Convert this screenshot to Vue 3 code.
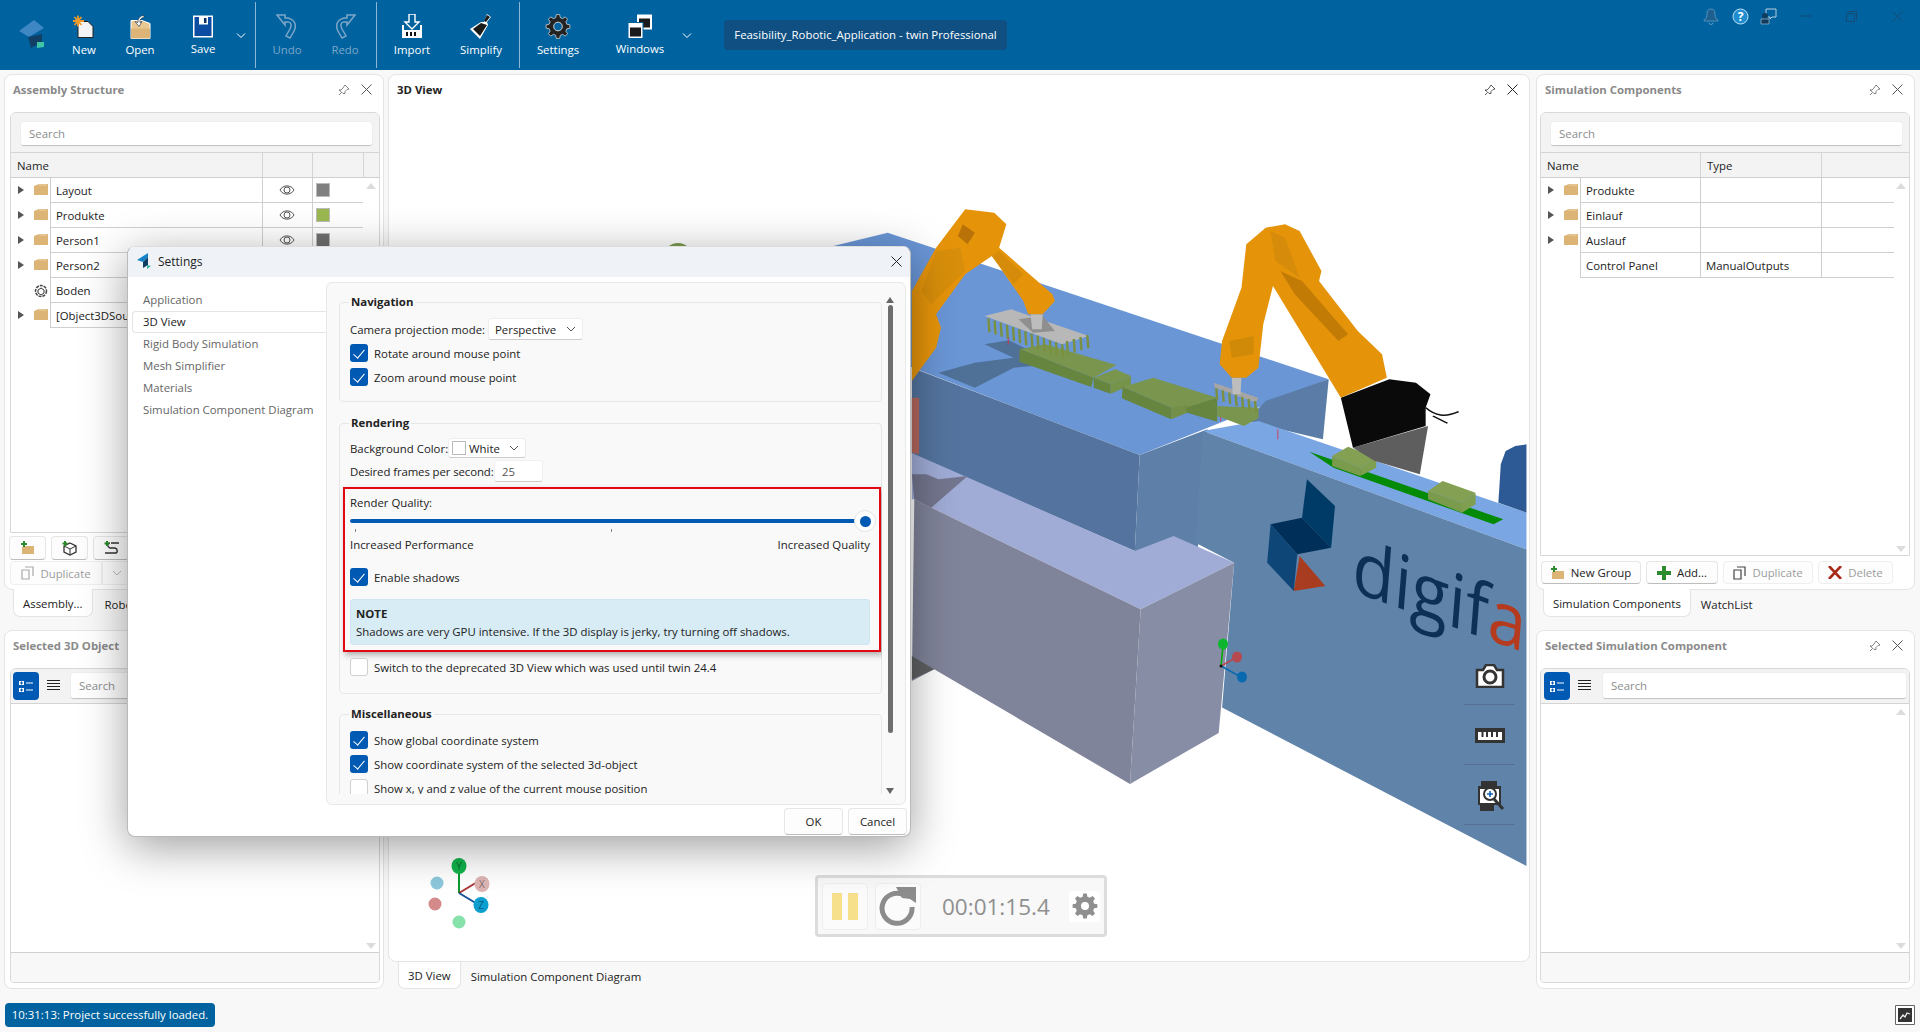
<template>
	<div class="app">
		<header class="topbar">
			<div class="logo-box">
				<svg width="28" height="30" viewBox="0 0 28 30">
					<polygon points="16,0 1,11 11,17 26,8" fill="#3f86c4" />
					<polygon points="10,17 24,14 24,22 13,28" fill="#123f66" />
					<polygon points="19,22 26,22 26,27 19,28" fill="#3fc4a4" />
				</svg>
			</div>
			<button class="tool w56">
				<svg class="tool-icon" width="24" height="24" viewBox="0 0 24 24">
					<path d="M6 7h10l5 5v11H6z" fill="#f4f4f4" stroke="#222" />
					<path d="M6 1v11M1 6.500h11M2.500 2.500l7 8M9.500 2.500l-7 8" stroke="#f09a2a" stroke-width="1.800" />
				</svg>
				<span>New</span>
			</button>
			<button class="tool w56">
				<svg class="tool-icon" width="26" height="24" viewBox="0 0 26 24">
					<path d="M4 6h11l8 3v15H4z" fill="#e9c792" stroke="#fff" />
					<path d="M4 14h19v10H4z" fill="#dcb478" />
					<path d="M17 1a6 6 0 0 0-6 7l-3-1 4 5 3-5-2 1a4 4 0 0 1 4-5z" fill="#fff" stroke="#123" stroke-width=".6" />
				</svg>
				<span>Open</span>
			</button>
			<button class="tool w70 raised">
				<svg class="tool-icon" width="22" height="22" viewBox="0 0 22 22">
					<path d="M1 0h20v22H1z" fill="#fff" />
					<path d="M2.500 1.500h17v19h-17z" fill="#0c4da2" />
					<path d="M7 1h9v8H7z" fill="#fff" />
					<path d="M12 2.500h2.500v5H12z" fill="#0c2f5c" />
				</svg>
				<span>Save</span>
			</button>
			<svg class="chev" width="12" height="8" viewBox="0 0 12 8"><path d="M2 1.500l4 4 4-4" fill="none" stroke="#fff" /></svg>
			<i class="sep"></i>
			<button class="tool w62 off">
				<svg class="tool-icon" width="22" height="25" viewBox="0 0 22 25">
					<path d="M1 1h8v3h3c7 2 9 7 6 13l-4 7-4-2 4-7c2-4 1-7-2-7H9v3z" fill="none" stroke="#7ba6c8" stroke-width="1.500" />
				</svg>
				<span>Undo</span>
			</button>
			<button class="tool w54 off">
				<svg class="tool-icon" width="22" height="25" viewBox="0 0 22 25">
					<path d="M21 1h-8v3h-3C3 6 1 11 4 17l4 7 4-2-4-7c-2-4-1-7 2-7h3v3z" fill="none" stroke="#7ba6c8" stroke-width="1.500" />
				</svg>
				<span>Redo</span>
			</button>
			<i class="sep"></i>
			<button class="tool w70">
				<svg class="tool-icon" width="24" height="25" viewBox="0 0 24 25">
					<path d="M9 0h6v8h4l-7 7-7-7h4z" fill="none" stroke="#fff" stroke-width="1.400" />
					<path d="M2 11v13h20V11h-2v5H4v-5z" fill="#fff" />
					<path d="M7 18v4M11 18v4M15 18v4" stroke="#111" stroke-width="2" />
				</svg>
				<span>Import</span>
			</button>
			<button class="tool w68">
				<svg class="tool-icon" width="26" height="25" viewBox="0 0 26 25">
					<path d="M19 0l4 3-4 5 1 3-8 14L2 15l11-7 3 0z" fill="#fff" />
					<path d="M13 9l6 2-7 11-7-7z" fill="#1a1a1a" />
					<path d="M19 1l3 2-4 5-2-1z" fill="#1a1a1a" />
				</svg>
				<span>Simplify</span>
			</button>
			<i class="sep"></i>
			<button class="tool w76">
				<svg class="tool-icon" width="26" height="25" viewBox="0 0 26 26">
					<path :d="gear(13, 13, 12.500, 9.500, 8)" fill="#222" stroke="#d8d8d8" stroke-width=".8" />
					<circle cx="13" cy="13" r="4.500" fill="#0063a0" stroke="#ddd" />
				</svg>
				<span>Settings</span>
			</button>
			<button class="tool w88 raised">
				<svg class="tool-icon" width="26" height="24" viewBox="0 0 26 24">
					<path d="M10 0h15v15H10z" fill="#fff" />
					<path d="M12 4h11v9H12z" fill="#1b1b1b" />
					<path d="M1 8h15v16H1z" fill="#fff" stroke="#0063a0" />
					<path d="M3 13h11v9H3z" fill="#1b1b1b" />
				</svg>
				<span>Windows</span>
			</button>
			<svg class="chev" width="12" height="8" viewBox="0 0 12 8"><path d="M2 1.500l4 4 4-4" fill="none" stroke="#fff" /></svg>
			<div class="title-badge">Feasibility_Robotic_Application - twin Professional</div>

			<div class="win-icons">
				<svg class="bell" width="16" height="17" viewBox="0 0 16 17"><path d="M8 1c3 0 4 2 4 5 0 3 1 5 3 6v1H1v-1c2-1 3-3 3-6 0-3 1-5 4-5z" fill="#1f5f90" stroke="#5f9cc4" stroke-width=".8" /><path d="M6 14.500a2 2 0 0 0 4 0" fill="none" stroke="#5f9cc4" /></svg>
				<svg width="17" height="17" viewBox="0 0 17 17"><circle cx="8.500" cy="8.500" r="7.500" fill="#1f8dd0" stroke="#bfe0f5" /><text x="8.500" y="12.500" text-anchor="middle" class="help">?</text></svg>
				<svg width="17" height="17" viewBox="0 0 17 17"><path d="M6 1h10v8h-4l-2 2V9H6z" fill="none" stroke="#bcd" /><circle cx="5" cy="8" r="3" fill="#123c5e" /><path d="M1 11h8v5H1z" fill="#123c5e" stroke="#bcd" stroke-width=".6" /></svg>
				<svg class="w-min" width="11" height="2" viewBox="0 0 11 2"><path d="M0 1h11" stroke="#174a72" /></svg>
				<svg class="w-max" width="11" height="11" viewBox="0 0 11 11"><path d="M.500 2.500h8v8h-8zM2.500.500h8v8" fill="none" stroke="#174a72" /></svg>
				<svg class="w-close" width="11" height="11" viewBox="0 0 11 11"><path d="M.500.500l10 10M10.500.500l-10 10" stroke="#174a72" /></svg>
			</div>
		</header>

		<main class="workspace">
			<section class="col left-col">
				<div class="panel tree-panel">
					<div class="panel-head">
						<span class="panel-title">Assembly Structure</span>
						<svg class="pin" width="12" height="12" viewBox="0 0 12 12"><path d="M7 1l4 4-2 .500-2 2 0 2L5 9.500 3 7.500l-2-1.500h2l2-2z M3.500 8.500L1 11" fill="none" stroke="#666" stroke-width=".8" /></svg>
						<svg class="x" width="11" height="11" viewBox="0 0 11 11"><path d="M.500.500l10 10M10.500.500l-10 10" stroke="#555" /></svg>
					</div>
					<div class="box assembly-box">
						<div class="search-row"><div class="search">Search</div></div>
						<div class="assembly-grid head-row">
							<span class="h-name">Name</span><span></span><span></span><span></span>
						</div>
						<div class="tree-body">
							<div class="assembly-grid row" v-for="r in assembly" :key="r.name">
								<span class="tw-cell">
									<i v-if="r.kids" class="twisty"></i>
									<svg v-if="r.kids" class="folder" width="14" height="11" viewBox="0 0 14 11"><path d="M0 2l5-2h9v11H0z" fill="#dcb476" /><path d="M5 1h8" stroke="#f0dcb8" stroke-width=".8" /></svg>
									<svg v-else class="folder" width="14" height="14" viewBox="0 0 14 14"><circle cx="7" cy="7" r="5.500" fill="none" stroke="#444" stroke-width="1.500" stroke-dasharray="3 1" /><path d="M7 4l3 2v3l-3 2-3-2V6z" fill="#fff" stroke="#333" /></svg>
								</span>
								<span class="cell">{{ r.name }}</span>
								<span class="cell center">
									<svg v-if="r.color" width="16" height="10" viewBox="0 0 16 10"><path d="M1 5c3-5.500 11-5.500 14 0-3 5.500-11 5.500-14 0z" fill="none" stroke="#555" /><circle cx="8" cy="5" r="3" fill="none" stroke="#555" /></svg>
								</span>
								<span class="cell">
									<i v-if="r.color" class="swatch" :style="{ background: r.color }"></i>
								</span>
							</div>
							<i class="scroll-up"></i>
						</div>
					</div>
					<div class="icon-btns">
						<button class="btn icon-btn"><svg width="14" height="14" viewBox="0 0 14 14"><path d="M1 6l4-1h8v8H1z" fill="#dcb476" /><path d="M3 0v6M0 3h6" stroke="#2d8a2d" stroke-width="2" /></svg></button>
						<button class="btn icon-btn"><svg width="16" height="15" viewBox="0 0 16 15"><path d="M8 2l6 3v6l-6 3-6-3V5z" fill="none" stroke="#333" stroke-width="1.300" /><path d="M2 5l6 3 6-3M8 8v6" fill="none" stroke="#333" /><path d="M3 0v5M.500 2.500h5" stroke="#2d8a2d" stroke-width="2" /></svg></button>
						<button class="btn icon-btn"><svg width="16" height="14" viewBox="0 0 16 14"><path d="M7 2h8M6 2c-3 0-3 4 0 5h5c3 1 3 5 0 5H1" fill="none" stroke="#333" stroke-width="1.400" /><path d="M3 0v5M.500 2.500h5" stroke="#2d8a2d" stroke-width="2" /></svg></button>
					</div>
					<div class="dup-row">
						<button class="btn dup off-text">
							<svg width="13" height="14" viewBox="0 0 13 14"><path d="M1 4h7v9H1zM4 1h8v9" fill="none" stroke="#aaa" stroke-width="1.200" /></svg>
							Duplicate
						</button>
						<button class="btn dup-more"><svg width="10" height="6" viewBox="0 0 10 6"><path d="M1 1l4 4 4-4" fill="none" stroke="#bbb" /></svg></button>
					</div>
				</div>
				<div class="tabs left-tabs">
					<span class="tab active">Assembly...</span>
					<span class="tab">Robot</span>
				</div>
				<div class="panel detail-panel">
					<div class="panel-head">
						<span class="panel-title">Selected 3D Object</span>
						<svg class="pin" width="12" height="12" viewBox="0 0 12 12"><path d="M7 1l4 4-2 .500-2 2 0 2L5 9.500 3 7.500l-2-1.500h2l2-2z M3.500 8.500L1 11" fill="none" stroke="#666" stroke-width=".8" /></svg>
						<svg class="x" width="11" height="11" viewBox="0 0 11 11"><path d="M.500.500l10 10M10.500.500l-10 10" stroke="#555" /></svg>
					</div>
					<div class="box detail-box">
						<div class="detail-tools">
							<button class="cat-btn"><svg width="14" height="13" viewBox="0 0 14 13"><path d="M0 1h5v4H0zM0 8h5v4H0z" fill="#fff" /><path d="M1 3h3M2.500 1.500v3M1 10h3M2.500 8.500v3" stroke="#0059b3" /><path d="M7 3h7M7 10h7" stroke="#fff" /></svg></button>
							<svg class="list-icon" width="13" height="12" viewBox="0 0 13 12"><path d="M0 .500h13M0 3.500h13M0 6.500h13M0 9.500h13" stroke="#222" /></svg>
							<div class="search">Search</div>
						</div>
						<div class="detail-body"><i class="scroll-up"></i><i class="scroll-down"></i></div>
						<div class="detail-foot"></div>
					</div>
				</div>
			</section>

			<section class="col center-col">
				<div class="panel view-panel">
					<svg class="scene" viewBox="388 74 1138 888">
						<ellipse cx="677" cy="256" rx="14" ry="14" fill="#7d9a4e" />
						<g transform="translate(780 180) scale(.4847 .3333)">
							<polygon v-for="(p, i) in scene" :key="i" :points="p.d" :fill="p.c" />
							<line v-for="(f, i) in fingers" :key="'f' + i" :x1="f.x" :y1="f.y" :x2="f.x + 2" :y2="f.y + f.h" stroke="#7a9040" stroke-width="5" />
							<path d="M1330 680c20 25 40 30 68 12M1345 705l30 22" fill="none" stroke="#111" stroke-width="4" />
							<path d="M469 470v20M1025 745v30M907 708v12" stroke="#e0304a" stroke-width="2" />
						</g>
						<text class="digifa" transform="translate(1350 590) rotate(19.500) skewX(15)">digif<tspan fill="#b53a1e">a</tspan></text>
						<!-- small axis on the selected object -->
						<path d="M1220 665l2-20" stroke="#0a0" stroke-width="1.500" />
						<path d="M1220 665l16-9" stroke="#b4494f" stroke-width="1.500" />
						<path d="M1220 665l20 11" stroke="#0a6ab0" stroke-width="1.500" />
						<ellipse cx="1222" cy="643" rx="5" ry="5.500" fill="#0bb52e" />
						<ellipse cx="1236" cy="656" rx="5" ry="5.500" fill="#b4494f" />
						<ellipse cx="1241" cy="676" rx="5" ry="5.500" fill="#0a6ab0" />
						<circle cx="1220" cy="665" r="1.500" fill="#111" />
						<!-- view gizmo -->
						<path d="M458 892v-24" stroke="#0a9a30" stroke-width="2" />
						<path d="M458 892l20-12" stroke="#a33" stroke-width="2" />
						<path d="M458 892l20 12" stroke="#14509a" stroke-width="2" />
						<circle cx="436" cy="882" r="6.500" fill="#8cc8dc" />
						<circle cx="434" cy="903" r="6.500" fill="#d48a8a" />
						<circle cx="458" cy="921" r="6.500" fill="#86e2aa" />
						<ellipse cx="481" cy="883" rx="7.500" ry="8" fill="#ddb5b5" />
						<ellipse cx="458" cy="865" rx="7.500" ry="8" fill="#11b34a" />
						<ellipse cx="480" cy="904" rx="7.500" ry="8" fill="#0d9fd0" />
						<text x="458" y="869" class="giz">Y</text>
						<text x="481" y="887" class="giz">X</text>
						<text x="480" y="908" class="giz">Z</text>
					</svg>
					<div class="panel-head over">
						<span class="panel-title dark">3D View</span>
						<svg class="pin" width="12" height="12" viewBox="0 0 12 12"><path d="M7 1l4 4-2 .500-2 2 0 2L5 9.500 3 7.500l-2-1.500h2l2-2z M3.500 8.500L1 11" fill="none" stroke="#333" stroke-width=".8" /></svg>
						<svg class="x" width="11" height="11" viewBox="0 0 11 11"><path d="M.500.500l10 10M10.500.500l-10 10" stroke="#222" /></svg>
					</div>
					<div class="view-tools">
						<span class="view-tool">
							<svg width="30" height="24" viewBox="0 0 30 24"><path d="M2 6h6l3-5h8l3 5h6v17H2z" fill="#fff" stroke="#333" stroke-width="2.500" /><circle cx="15" cy="13" r="6" fill="none" stroke="#333" stroke-width="3" /></svg>
						</span>
						<span class="view-tool">
							<svg width="30" height="15" viewBox="0 0 30 15"><path d="M0 0h30v15H0z" fill="#333" /><path d="M3 4h24v8H3z" fill="#fff" /><path d="M7.500 4v5M12 4v5M17 4v5M22 4v5" stroke="#333" stroke-width="2" /></svg>
						</span>
						<span class="view-tool">
							<svg width="30" height="30" viewBox="0 0 30 30"><path d="M6 0h16v5H6zM3 5h23v19H3z" fill="#333" /><path d="M5 8h19v14H5z" fill="#fff" /><circle cx="15" cy="13" r="6" fill="#fff" stroke="#333" stroke-width="2" /><path d="M12 13h6M15 10v6" stroke="#1060b0" stroke-width="1.600" /><path d="M19 18l9 10" stroke="#333" stroke-width="3" /><path d="M5 24h14v6H5z" fill="#333" /></svg>
						</span>
					</div>
					<div class="player">
						<span class="p-btn pause"><i></i><i></i></span>
						<span class="p-btn reload">
							<svg width="40" height="42" viewBox="0 0 40 42"><path d="M26 10A15 15 0 1 0 34 22" fill="none" stroke="#8c8c8c" stroke-width="5" /><path d="M18 2h20v16l-6-4-8-1z" fill="#8c8c8c" /></svg>
						</span>
						<span class="time">00:01:15.4</span>
						<span class="p-gear">
							<svg width="26" height="26" viewBox="0 0 26 26"><path :d="gear(13, 13, 12.500, 9.500, 8)" fill="#8f8f8f" /><circle cx="13" cy="13" r="4" fill="#fff" /></svg>
						</span>
					</div>
				</div>
				<div class="tabs center-tabs">
					<span class="tab active">3D View</span>
					<span class="tab">Simulation Component Diagram</span>
				</div>
			</section>

			<section class="col right-col">
				<div class="panel tree-panel">
					<div class="panel-head">
						<span class="panel-title">Simulation Components</span>
						<svg class="pin" width="12" height="12" viewBox="0 0 12 12"><path d="M7 1l4 4-2 .500-2 2 0 2L5 9.500 3 7.500l-2-1.500h2l2-2z M3.500 8.500L1 11" fill="none" stroke="#666" stroke-width=".8" /></svg>
						<svg class="x" width="11" height="11" viewBox="0 0 11 11"><path d="M.500.500l10 10M10.500.500l-10 10" stroke="#555" /></svg>
					</div>
					<div class="box comp-box">
						<div class="search-row"><div class="search">Search</div></div>
						<div class="comp-grid head-row">
							<span class="h-name">Name</span><span class="h-cell">Type</span><span></span>
						</div>
						<div class="tree-body">
							<div class="comp-grid row" v-for="r in components" :key="r.name">
								<span class="tw-cell">
									<i v-if="r.kids" class="twisty"></i>
									<svg v-if="r.kids" class="folder" width="14" height="11" viewBox="0 0 14 11"><path d="M0 2l5-2h9v11H0z" fill="#dcb476" /><path d="M5 1h8" stroke="#f0dcb8" stroke-width=".8" /></svg>
								</span>
								<span class="cell">{{ r.name }}</span>
								<span class="cell">{{ r.type }}</span>
								<span class="cell"></span>
							</div>
							<i class="scroll-up"></i><i class="scroll-down"></i>
						</div>
					</div>
					<div class="comp-btns">
						<button class="btn b-group"><svg width="14" height="14" viewBox="0 0 14 14"><path d="M1 6l4-1h8v8H1z" fill="#dcb476" /><path d="M3 0v6M0 3h6" stroke="#2d8a2d" stroke-width="2" /></svg>New Group</button>
						<button class="btn b-add"><svg width="14" height="14" viewBox="0 0 14 14"><path d="M7 0v14M0 7h14" stroke="#2d8a2d" stroke-width="4" /></svg>Add...</button>
						<button class="btn b-dup off-text"><svg width="13" height="14" viewBox="0 0 13 14"><path d="M1 4h7v9H1z" fill="none" stroke="#444" stroke-width="1.200" /><path d="M4 1h8v9" fill="none" stroke="#444" stroke-width="1.200" /></svg>Duplicate</button>
						<button class="btn b-del off-text"><svg width="14" height="13" viewBox="0 0 14 13"><path d="M1 0l12 13M13 0L1 13" stroke="#a82b17" stroke-width="2.600" /></svg>Delete</button>
					</div>
				</div>
				<div class="tabs right-tabs">
					<span class="tab active">Simulation Components</span>
					<span class="tab">WatchList</span>
				</div>
				<div class="panel detail-panel">
					<div class="panel-head">
						<span class="panel-title">Selected Simulation Component</span>
						<svg class="pin" width="12" height="12" viewBox="0 0 12 12"><path d="M7 1l4 4-2 .500-2 2 0 2L5 9.500 3 7.500l-2-1.500h2l2-2z M3.500 8.500L1 11" fill="none" stroke="#666" stroke-width=".8" /></svg>
						<svg class="x" width="11" height="11" viewBox="0 0 11 11"><path d="M.500.500l10 10M10.500.500l-10 10" stroke="#555" /></svg>
					</div>
					<div class="box detail-box">
						<div class="detail-tools">
							<button class="cat-btn"><svg width="14" height="13" viewBox="0 0 14 13"><path d="M0 1h5v4H0zM0 8h5v4H0z" fill="#fff" /><path d="M1 3h3M2.500 1.500v3M1 10h3M2.500 8.500v3" stroke="#0059b3" /><path d="M7 3h7M7 10h7" stroke="#fff" /></svg></button>
							<svg class="list-icon" width="13" height="12" viewBox="0 0 13 12"><path d="M0 .500h13M0 3.500h13M0 6.500h13M0 9.500h13" stroke="#222" /></svg>
							<div class="search">Search</div>
						</div>
						<div class="detail-body"><i class="scroll-up"></i><i class="scroll-down"></i></div>
						<div class="detail-foot"></div>
					</div>
				</div>
			</section>
		</main>

		<footer class="statusbar">
			<span class="status-msg">10:31:13: Project successfully loaded.</span>
			<span class="status-icon">
				<svg width="20" height="20" viewBox="0 0 20 20"><path d="M.500.500h19v19H.500z" fill="#fff" stroke="#666" /><path d="M3 3h14v14H3z" fill="#333" /><path d="M5 14l3-4 2 2 2-4 3 1" fill="none" stroke="#eee" stroke-width="1.300" /></svg>
			</span>
		</footer>

		<div class="dialog">
			<div class="dlg-title">
				<svg width="14" height="16" viewBox="0 0 14 16">
					<polygon points="11,0 0,7 6,9 11,4" fill="#1583c8" />
					<polygon points="6,9 11,4 11,12 6,15" fill="#0d3f66" />
					<polygon points="10,12 14,13 10,16" fill="#34b7a0" />
				</svg>
				<span>Settings</span>
				<svg class="dlg-x" width="11" height="11" viewBox="0 0 11 11"><path d="M.500.500l10 10M10.500.500l-10 10" stroke="#222" /></svg>
			</div>
			<div class="dlg-body">
				<nav class="dlg-nav">
					<a v-for="n in navItems" :key="n" class="nav-item" :class="{ active: n === '3D View' }">{{ n }}</a>
				</nav>
				<div class="dlg-content">
					<div class="scroller">
						<fieldset class="group nav-group">
							<legend>Navigation</legend>
							<div class="field">
								<label class="cam-label">Camera projection mode:</label>
								<span class="combo persp">Perspective<svg width="10" height="6" viewBox="0 0 10 6"><path d="M1 1l4 4 4-4" fill="none" stroke="#555" /></svg></span>
							</div>
							<div class="check first"><i class="box-on"></i>Rotate around mouse point</div>
							<div class="check"><i class="box-on"></i>Zoom around mouse point</div>
						</fieldset>
						<fieldset class="group render-group">
							<legend>Rendering</legend>
							<div class="field bg-row">
								<label class="bg-label">Background Color:</label>
								<span class="combo white"><i class="color-chip"></i>White<svg width="10" height="6" viewBox="0 0 10 6"><path d="M1 1l4 4 4-4" fill="none" stroke="#555" /></svg></span>
							</div>
							<div class="field fps-row">
								<label class="fps-label">Desired frames per second:</label>
								<span class="num">25</span>
							</div>
							<div class="callout">
								<div class="rq-label">Render Quality:</div>
								<div class="slider">
									<div class="track"></div>
									<div class="thumb"><i></i></div>
								</div>
								<div class="ticks"><i></i><i></i></div>
								<div class="rq-ends"><span>Increased Performance</span><span>Increased Quality</span></div>
								<div class="check shadow-check"><i class="box-on"></i>Enable shadows</div>
								<div class="note">
									<b>NOTE</b>
									<p>Shadows are very GPU intensive. If the 3D display is jerky, try turning off shadows.</p>
								</div>
							</div>
							<div class="check depr"><i class="box-off"></i>Switch to the deprecated 3D View which was used until twin 24.4</div>
						</fieldset>
						<fieldset class="group misc-group">
							<legend>Miscellaneous</legend>
							<div class="check"><i class="box-on"></i>Show global coordinate system</div>
							<div class="check"><i class="box-on"></i>Show coordinate system of the selected 3d-object</div>
							<div class="check"><i class="box-off"></i>Show x, y and z value of the current mouse position</div>
						</fieldset>
					</div>
					<div class="vbar">
						<i class="arr-up"></i>
						<i class="thumb-v"></i>
						<i class="arr-down"></i>
					</div>
				</div>
			</div>
			<div class="dlg-foot">
				<button class="btn dlg-btn">OK</button>
				<button class="btn dlg-btn">Cancel</button>
			</div>
		</div>
	</div>
</template>

<script setup>
const assembly = [
	{ name: "Layout", kids: true, color: "#808080" },
	{ name: "Produkte", kids: true, color: "#9bb850" },
	{ name: "Person1", kids: true, color: "#707070" },
	{ name: "Person2", kids: true, color: "#707070" },
	{ name: "Boden", kids: false, color: "" },
	{ name: "[Object3DSource]", kids: true, color: "" },
];

const components = [
	{ name: "Produkte", kids: true, type: "" },
	{ name: "Einlauf", kids: true, type: "" },
	{ name: "Auslauf", kids: true, type: "" },
	{ name: "Control Panel", kids: false, type: "ManualOutputs" },
];

const navItems = [
	"Application",
	"3D View",
	"Rigid Body Simulation",
	"Mesh Simplifier",
	"Materials",
	"Simulation Component Diagram",
];

// cog outline, used by the toolbar and the player
const gear = (cx, cy, outer, inner, teeth) => {
	let d = "";
	const step = (Math.PI * 2) / teeth;
	for (let i = 0; i < teeth; i++) {
		const a = i * step;
		const pts = [
			[inner, a - step * 0.32],
			[outer, a - step * 0.18],
			[outer, a + step * 0.18],
			[inner, a + step * 0.32],
		];
		pts.forEach(([r, t], j) => {
			const x = (cx + r * Math.cos(t)).toFixed(2);
			const y = (cy + r * Math.sin(t)).toFixed(2);
			d += `${i === 0 && j === 0 ? "M" : "L"}${x} ${y}`;
		});
	}
	return d + "Z";
};

const fingerRow = (x0, y0, x1, y1, n, h) =>
	Array.from({ length: n }, (_, i) => ({
		x: x0 + ((x1 - x0) * i) / (n - 1),
		y: y0 + ((y1 - y0) * i) / (n - 1),
		h,
	}));

const fingers = [
	...fingerRow(428, 412, 580, 490, 13, 42),
	...fingerRow(590, 480, 632, 462, 4, 40),
	...fingerRow(898, 622, 978, 660, 7, 34),
];

// polygons of the 3D scene, drawn back to front
const scene = [
	{ c: "#6a96d6", d: "108,195 220,155 1130,595 740,822 200,520 100,500" },
	{ c: "#4f7097", d: "325,575 400,545 480,530 420,490 470,478 640,600 560,550 480,560 400,620" },
	{ c: "#54749f", d: "270,560 740,822 730,1110 270,820" },
	{ c: "#5d7fa8", d: "740,822 880,745 860,1100 730,1110" },
	{ c: "#5a7ca6", d: "1000,660 1130,595 1118,775 960,720" },
	{ c: "#b5685e", d: "270,650 285,650 285,820 270,815" },
	{ c: "#a0acd6", d: "270,816 730,1110 810,1065 935,1145 742,1285 275,955 270,955" },
	{ c: "#74768f", d: "270,880 300,880 325,895 385,885 310,980 275,955" },
	{ c: "#80849a", d: "275,955 742,1285 720,1809 316,1465 270,1500" },
	{ c: "#878da5", d: "742,1285 935,1145 903,1656 720,1809" },
	{ c: "#5f6062", d: "270,1425 316,1465 270,1495" },
	{ c: "#7aa6e4", d: "870,750 985,720 1538,995 1538,1105" },
	{ c: "#6083aa", d: "870,750 1538,1105 1538,2055 910,1580 935,1145 855,1085" },
	{ c: "#003a66", d: "1085,895 1143,975 1135,1100 1075,1010" },
	{ c: "#00305a", d: "1010,1030 1075,1010 1135,1100 1065,1120" },
	{ c: "#0f4678", d: "1010,1030 1065,1120 1058,1230 1003,1145" },
	{ c: "#a83c20", d: "1070,1125 1123,1215 1058,1230" },

	// conveyor and boxes
	{ c: "#058a05", d: "1090,812 1490,1015 1470,1030 1140,860" },
	{ c: "#84a052", d: "1137,825 1170,797 1228,830 1195,860" },
	{ c: "#7a9a4c", d: "1137,825 1195,860 1195,885 1137,855" },
	{ c: "#7f9e50", d: "1195,860 1228,830 1228,860 1195,885" },
	{ c: "#84a052", d: "1335,930 1365,900 1433,935 1405,965" },
	{ c: "#7a9a4c", d: "1335,930 1405,965 1405,995 1335,955" },
	{ c: "#7f9e50", d: "1405,965 1433,935 1433,970 1405,995" },
	{ c: "#7a964e", d: "492,505 545,490 692,552 645,590" },
	{ c: "#66853e", d: "492,505 645,590 640,618 492,542" },
	{ c: "#7a964e", d: "645,590 690,565 722,585 680,610" },
	{ c: "#66853e", d: "645,590 680,610 680,638 645,620" },
	{ c: "#76934a", d: "680,610 722,585 722,612 680,638" },
	{ c: "#7a964e", d: "705,618 768,590 900,650 835,682 805,680" },
	{ c: "#66853e", d: "705,618 805,680 805,715 703,652" },
	{ c: "#738f48", d: "805,680 838,672 838,695 805,715" },
	{ c: "#66853e", d: "835,680 900,650 900,722 838,695" },
	{ c: "#7a964e", d: "900,675 985,680 985,712 955,735 900,705" },

	// stand, base and robots
	{ c: "#5e5e5e", d: "1180,800 1335,735 1318,880 1225,840" },
	{ c: "#0a0a0a", d: "1155,650 1255,595 1310,605 1340,640 1330,680 1330,735 1180,800" },
	{ c: "#2d5a94", d: "1485,850 1495,810 1515,795 1538,790 1538,995 1480,965" },
	{ c: "#b8b8b8", d: "420,405 475,385 635,465 580,490" },
	{ c: "#8f8f8f", d: "490,415 540,405 565,450 520,455" },
	{ c: "#bdbdbd", d: "515,400 540,400 538,445 518,445" },
	{ c: "#a5a5a5", d: "893,605 985,650 980,665 895,620" },
	{ c: "#bdbdbd", d: "930,590 950,590 948,640 932,640" },
	{ c: "#e5940a", d: "270,330 320,200 380,85 440,95 465,130 450,200 560,340 565,360 540,400 510,400 500,360 435,225 380,280 320,400 330,440 320,500 285,570 270,600" },
	{ c: "#b87208", d: "375,130 400,155 385,190 365,165" },
	{ c: "#d68c0a", d: "450,210 500,280 480,310 435,225" },
	{ c: "#d88e0a", d: "320,210 370,200 380,270 310,370 290,330" },
	{ c: "#e5940a", d: "960,190 1000,140 1040,130 1070,150 1115,270 1110,300 1190,450 1240,520 1250,590 1155,650 1105,530 1015,315 995,430 985,560 960,590 930,590 905,550 910,480 950,320" },
	{ c: "#c27c06", d: "1030,270 1075,300 1170,460 1150,480 1060,340" },
	{ c: "#d68c0a", d: "1010,150 1040,170 1070,290 1020,240" },
	{ c: "#d08a08", d: "925,480 975,465 975,520 930,530" },
];
</script>

<style>
body {
	margin: 0;
	background: #f8f8f8;
	overflow: hidden;
}
</style>

<style scoped>
* {
	box-sizing: border-box;
}
.app {
	position: relative;
	width: 1920px;
	height: 1032px;
	overflow: hidden;
	background: #f8f8f8;
	font: 11.4px "Open Sans", "Noto Sans", sans-serif;
	color: #222;
	display: flex;
	flex-direction: column;
}
button {
	font: inherit;
	color: inherit;
	padding: 0;
	border: 0;
	background: none;
}

/* top bar */
.topbar {
	height: 70px;
	background: #0063a0;
	display: flex;
	align-items: flex-start;
	flex: none;
}
.logo-box {
	width: 56px;
	padding: 20px 0 0 18px;
}
.tool {
	height: 70px;
	display: flex;
	flex-direction: column;
	align-items: center;
	color: #fff;
	padding-top: 14px;
}
.tool-icon {
	height: 25px;
	flex: none;
}
.tool span {
	margin-top: 3px;
	line-height: 16px;
}
.tool.raised span {
	margin-top: 2px;
}
.w54 { width: 54px; }
.w56 { width: 56px; }
.w62 { width: 62px; }
.w68 { width: 68px; }
.w70 { width: 70px; }
.w76 { width: 76px; }
.w88 { width: 88px; }
.tool.off {
	color: #7ba6c8;
}
.chev {
	margin: 32px 4px 0 -3px;
	flex: none;
}
.sep {
	width: 1px;
	height: 66px;
	margin: 2px 0 0 4px;
	background: #8bb8d6;
}
.title-badge {
	margin: 20px 0 0 27px;
	width: 283px;
	height: 30px;
	line-height: 30px;
	text-align: center;
	background: #0f4f82;
	color: #fff;
	border-radius: 4px;
}
.win-icons {
	margin-left: auto;
	height: 32px;
	display: flex;
	align-items: center;
	gap: 11px;
	padding-right: 17px;
}
.bell { margin-right: 2px; }
.w-min { margin-left: 12px; }
.w-max { margin-left: 24px; }
.w-close { margin-left: 24px; }
.help {
	font: bold 12px "Open Sans", sans-serif;
	fill: #fff;
}

/* docking layout */
.workspace {
	height: 915px;
	margin-top: 4px;
	padding-left: 4px;
	display: flex;
	flex: none;
}
.col {
	display: flex;
	flex-direction: column;
}
.left-col { width: 380px; }
.center-col { width: 1142px; margin-left: 4px; }
.right-col { width: 379px; margin-left: 6px; }
.panel {
	background: #fff;
	border: 1px solid #e4e4e4;
	border-radius: 8px;
}
.panel-head {
	height: 37px;
	padding: 0 11px 8px 8px;
	display: flex;
	align-items: center;
	gap: 11px;
}
.panel-title {
	font-weight: 700;
	color: #8a8a8a;
	margin-right: auto;
}
.panel-title.dark {
	color: #222;
}
.tree-panel {
	height: 516px;
	display: flex;
	flex-direction: column;
}
.detail-panel {
	height: 359px;
	margin-top: 13px;
	display: flex;
	flex-direction: column;
}
.box {
	margin: 0 3px 0 5px;
	border: 1px solid #d8d8d8;
	border-radius: 6px 6px 0 0;
	display: flex;
	flex-direction: column;
	overflow: hidden;
}
.assembly-box { height: 421px; }
.comp-box { height: 444px; margin: 0 4px 0 3px; }
.right-col .detail-box { margin: 0 4px 5px 3px; }
.search-row {
	height: 40px;
	padding: 9px 7px 0 10px;
	background: #f3f3f3;
	border-bottom: 1px solid #d4d4d4;
	flex: none;
}
.search {
	height: 24px;
	line-height: 23px;
	padding-left: 8px;
	background: #fff;
	border-radius: 3px;
	border-bottom: 1px solid #c4c4c4;
	box-shadow: 0 0 0 1px #eee;
	color: #8d8d8d;
}
.head-row {
	height: 25px;
	background: #f3f3f3;
	border-bottom: 1px solid #cfcfcf;
	flex: none;
}
.head-row > span {
	line-height: 25px;
	height: 24px;
	border-left: 1px solid #d4d4d4;
	padding-left: 6px;
}
.head-row > .h-name {
	border-left: 0;
}
.assembly-grid {
	display: grid;
	grid-template-columns: 251px 50px 51px 16px;
}
.tree-body .assembly-grid {
	grid-template-columns: 39px 212px 50px 51px;
}
.comp-grid {
	display: grid;
	grid-template-columns: 159px 121px 89px;
}
.tree-body .comp-grid {
	grid-template-columns: 39px 120px 121px 73px;
}
.tree-body {
	position: relative;
	flex: 1;
	background: #fff;
}
.row {
	height: 25px;
}
.tw-cell {
	display: flex;
	align-items: center;
	padding-bottom: 2px;
	position: relative;
}
.twisty {
	position: absolute;
	left: 7px;
	top: 8px;
	border-left: 6px solid #555;
	border-top: 4px solid transparent;
	border-bottom: 4px solid transparent;
}
.folder {
	position: absolute;
	left: 23px;
	top: 6px;
}
.cell {
	border-left: 1px solid #cfcfcf;
	border-bottom: 1px solid #cfcfcf;
	padding-left: 5px;
	line-height: 25px;
	white-space: nowrap;
	overflow: hidden;
}
.center {
	display: flex;
	align-items: center;
	justify-content: center;
	padding: 0 2px 0 0;
}
.swatch {
	display: block;
	width: 14px;
	height: 14px;
	margin: 5px 0 0 -2px;
	border: 1px solid #bbb;
}
.scroll-up {
	position: absolute;
	right: 3px;
	top: 5px;
	border: 5px solid transparent;
	border-top: 0;
	border-bottom: 6px solid #dcdcdc;
}
.scroll-down {
	position: absolute;
	right: 3px;
	bottom: 3px;
	border: 5px solid transparent;
	border-bottom: 0;
	border-top: 6px solid #dcdcdc;
}
.btn {
	background: #fdfdfd;
	border: 1px solid #e6e6e6;
	border-bottom-color: #bdbdbd;
	border-radius: 4px;
	display: flex;
	align-items: center;
	justify-content: center;
}
.off-text {
	color: #9c9c9c;
}
.icon-btns {
	display: flex;
	gap: 5px;
	margin: 3px 0 0 4px;
	height: 24px;
}
.icon-btn {
	width: 37px;
}
.dup-row {
	display: flex;
	margin: 1px 0 0 5px;
	height: 24px;
}
.dup {
	width: 92px;
	gap: 6px;
	border-color: #efefef;
	border-radius: 4px 0 0 4px;
}
.dup-more {
	width: 30px;
	border-color: #efefef;
	border-radius: 0 4px 4px 0;
}
.comp-btns {
	display: flex;
	margin: 5px 0 0 4px;
	height: 23px;
	gap: 5px;
}
.comp-btns .btn {
	gap: 6px;
}
.b-group { width: 100px; }
.b-add { width: 72px; }
.b-dup { width: 90px; border-color: #eee; }
.b-del { width: 75px; border-color: #eee; }
.tabs {
	height: 27px;
	display: flex;
	flex: none;
}
.left-tabs { padding-left: 9px; }
.left-tabs .tab.active { margin-right: 2px; }
.right-tabs { padding-left: 7px; }
.center-tabs { padding-left: 10px; }
.tab {
	line-height: 29px;
	padding: 0 10px;
	white-space: nowrap;
}
.tab.active {
	background: #fff;
	border: 1px solid #e4e4e4;
	border-top: 0;
	border-radius: 0 0 7px 7px;
	margin-top: -1px;
	height: 28px;
	line-height: 30px;
	padding: 0 9px;
}
.detail-box {
	flex: 1;
	margin-bottom: 5px;
	border-radius: 6px 6px 4px 4px;
}
.detail-tools {
	height: 35px;
	padding: 3px 3px 0;
	display: flex;
	background: #f3f3f3;
	border-bottom: 1px solid #d4d4d4;
	flex: none;
}
.left-col .detail-tools { padding-left: 2px; }
.left-col .list-icon { margin-right: 11px; }
.cat-btn {
	width: 26px;
	height: 28px;
	background: #0059b3;
	border-radius: 4px;
	display: flex;
	align-items: center;
	justify-content: center;
}
.list-icon {
	margin: 8px 12px 0 8px;
	flex: none;
}
.detail-tools .search {
	flex: 1;
	height: 26px;
	margin-top: 1px;
	line-height: 25px;
}
.detail-body {
	position: relative;
	flex: 1;
	background: #fff;
	border-bottom: 1px solid #d0d0d0;
}
.detail-foot {
	height: 29px;
	background: #f8f8f8;
	flex: none;
}

/* 3D view */
.view-panel {
	height: 888px;
	position: relative;
	overflow: hidden;
	flex: none;
}
.scene {
	position: absolute;
	left: 0;
	top: 0;
	width: 1138px;
	height: 888px;
}
.panel-head.over {
	position: relative;
}
.digifa {
	font: 500 72px "Open Sans", sans-serif;
	fill: #0c3056;
}
.giz {
	font: 10px "Open Sans", sans-serif;
	fill: rgba(0, 0, 0, 0.45);
	text-anchor: middle;
}
.view-tools {
	position: absolute;
	left: 1075px;
	top: 570px;
	width: 51px;
	display: flex;
	flex-direction: column;
}
.view-tool {
	height: 60px;
	display: flex;
	align-items: center;
	justify-content: center;
	border-bottom: 1px solid rgba(60, 70, 90, 0.3);
	padding-top: 2px;
}
.player {
	position: absolute;
	left: 426px;
	top: 800px;
	width: 292px;
	height: 62px;
	padding: 5px 4px;
	background: #f8f8f8;
	border: 3px solid #dcdcdc;
	border-radius: 4px;
	display: flex;
	align-items: center;
}
.p-btn {
	height: 47px;
	background: #fbfbfb;
	border: 1px solid #eee;
	border-radius: 4px;
	display: flex;
	align-items: center;
	justify-content: center;
}
.pause {
	width: 46px;
	gap: 6px;
}
.pause i {
	width: 10px;
	height: 27px;
	background: #f6e08c;
}
.reload {
	width: 46px;
	margin-left: 7px;
}
.time {
	margin-left: 21px;
	font-size: 22.500px;
	color: #8f8f8f;
	width: 127px;
	white-space: nowrap;
}
.p-gear {
	width: 31px;
	height: 31px;
	background: #fff;
	border-radius: 4px;
	display: flex;
	align-items: center;
	justify-content: center;
}

/* status bar */
.statusbar {
	height: 24px;
	margin-top: 14px;
	padding: 0 5px;
	display: flex;
	justify-content: space-between;
	flex: none;
}
.status-msg {
	width: 210px;
	line-height: 24px;
	text-align: center;
	background: #0063a0;
	color: #fff;
	border-radius: 4px;
	white-space: nowrap;
}
.status-icon {
	padding-top: 2px;
}

/* settings dialog */
.dialog {
	position: absolute;
	left: 127px;
	top: 246px;
	width: 784px;
	height: 591px;
	background: #fff;
	border: 1px solid #b9b9b9;
	border-top-color: #ddd;
	border-radius: 8px;
	box-shadow: 0 10px 45px rgba(0, 0, 0, 0.38);
	overflow: hidden;
	display: flex;
	flex-direction: column;
}
.dlg-title {
	height: 30px;
	background: #eff3f8;
	display: flex;
	align-items: center;
	padding: 0 8px 2px 9px;
	gap: 7px;
	font-size: 12px;
	flex: none;
}
.dlg-x {
	margin-left: auto;
}
.dlg-body {
	display: flex;
	height: 523px;
	margin-top: 5px;
	flex: none;
}
.dlg-nav {
	width: 198px;
	padding: 7px 0 0 4px;
	display: flex;
	flex-direction: column;
}
.nav-item {
	height: 22px;
	line-height: 22px;
	padding-left: 11px;
	color: #666;
	white-space: nowrap;
}
.nav-item.active {
	background: #fff;
	color: #222;
	border: 1px solid #e4e4e4;
	border-right: 0;
	border-radius: 4px 0 0 4px;
	line-height: 20px;
	padding-left: 10px;
}
.dlg-content {
	width: 580px;
	background: #f9f9f9;
	border: 1px solid #e8e8e8;
	border-radius: 6px;
	padding: 11px 0 10px 12px;
	display: flex;
	position: relative;
}
.scroller {
	width: 543px;
	height: 500px;
	overflow: hidden;
	flex: none;
}
.group {
	margin: 0;
	padding: 0 10px;
	border: 1px solid #e6e6e6;
	border-radius: 4px;
	min-width: 0;
}
.group legend {
	font-weight: 700;
	color: #222;
	padding: 0 2px;
	margin-left: -1px;
	line-height: 16px;
}
.nav-group { height: 108px; padding-top: 8px; }
.render-group { height: 279px; margin-top: 13px; padding-top: 7px; }
.misc-group { height: 100px; margin-top: 12px; padding-top: 3px; }
.field {
	display: flex;
	align-items: center;
	height: 22px;
	white-space: nowrap;
}
.cam-label { width: 138px; flex: none; }
.bg-label { width: 98px; flex: none; }
.fps-label { width: 144px; flex: none; letter-spacing: -0.1px; }
.combo {
	display: flex;
	align-items: center;
	height: 100%;
	background: #fff;
	border: 1px solid #eee;
	border-bottom-color: #ccc;
	border-radius: 3px;
	padding: 0 6px;
	justify-content: space-between;
}
.persp {
	width: 95px;
}
.bg-row { height: 20px; }
.white {
	width: 78px;
	padding: 0 6px 0 3px;
	gap: 3px;
	justify-content: flex-start;
}
.white svg {
	margin-left: auto;
}
.color-chip {
	width: 14px;
	height: 14px;
	background: #fff;
	border: 1px solid #bbb;
	flex: none;
}
.fps-row {
	margin-top: 2px;
}
.num {
	width: 49px;
	height: 22px;
	line-height: 22px;
	padding-left: 7px;
	background: #fff;
	border: 1px solid #f0f0f0;
	border-bottom-color: #ccc;
	border-radius: 3px;
	color: #555;
}
.check {
	height: 18px;
	margin-top: 6px;
	display: flex;
	align-items: center;
	gap: 6px;
	white-space: nowrap;
}
.check.first {
	margin-top: 4px;
}
.box-on,
.box-off {
	width: 18px;
	height: 18px;
	border-radius: 3px;
	flex: none;
	position: relative;
}
.box-on {
	background: #0059b3;
}
.box-on::after {
	content: "";
	position: absolute;
	left: 6px;
	top: 3px;
	width: 5px;
	height: 10px;
	border: solid #fff;
	border-width: 0 1px 1px 0;
	transform: rotate(40deg);
}
.box-off {
	background: #fff;
	border: 1px solid #d0d0d0;
}
.callout {
	margin: 5px -10px 0 -7px;
	height: 165px;
	padding: 6px 9px 0 5px;
	border: 2px solid #e30613;
	box-shadow: 2px 3px 6px rgba(0, 0, 0, 0.3);
}
.rq-label {
	line-height: 16px;
}
.slider {
	position: relative;
	height: 22px;
	margin-top: -1px;
}
.track {
	position: absolute;
	left: 0;
	right: 6px;
	top: 9px;
	height: 4px;
	border-radius: 2px;
	background: #0059b3;
}
.thumb {
	position: absolute;
	right: -6px;
	top: 0;
	width: 22px;
	height: 22px;
	border-radius: 50%;
	background: #fff;
	border: 1px solid #e4e4e4;
	display: flex;
	align-items: center;
	justify-content: center;
}
.thumb i {
	width: 11px;
	height: 11px;
	border-radius: 50%;
	background: #0059b3;
}
.ticks {
	display: flex;
	height: 4px;
	margin-top: -3px;
	padding-left: 5px;
	gap: 255px;
}
.ticks i {
	width: 1px;
	height: 3px;
	background: #888;
}
.rq-ends {
	display: flex;
	justify-content: space-between;
	margin-top: 4px;
	line-height: 16px;
}
.shadow-check {
	margin-top: 15px;
}
.note {
	margin-top: 13px;
	height: 46px;
	padding: 6px 5px 0;
	background: #d8ecf5;
	border: 1px solid #cfe6f0;
	border-radius: 3px;
}
.note b {
	display: block;
	line-height: 16px;
}
.note p {
	margin: 2px 0 0;
	line-height: 16px;
	white-space: nowrap;
}
.depr {
	margin-top: 6px;
}
.vbar {
	width: 14px;
	margin-left: 1px;
	height: 500px;
	display: flex;
	flex-direction: column;
	align-items: center;
	padding-top: 3px;
}
.arr-up {
	border: 4px solid transparent;
	border-top: 0;
	border-bottom: 6px solid #666;
}
.arr-down {
	margin-top: auto;
	border: 4px solid transparent;
	border-bottom: 0;
	border-top: 6px solid #666;
}
.thumb-v {
	width: 5px;
	height: 428px;
	margin-top: 2px;
	background: #6e6e6e;
	border-radius: 3px;
}
.dlg-foot {
	display: flex;
	justify-content: flex-end;
	gap: 5px;
	padding: 3px 3px 0 0;
}
.dlg-btn {
	width: 59px;
	height: 27px;
}
</style>
